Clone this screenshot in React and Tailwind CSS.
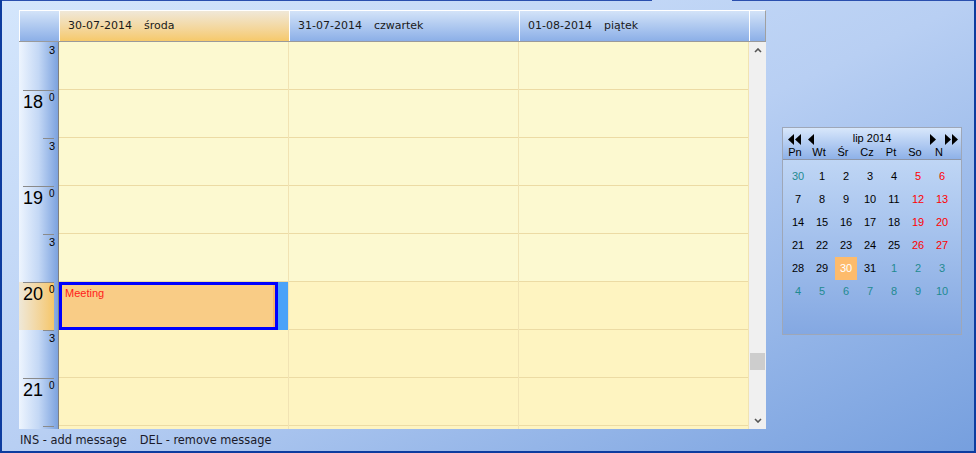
import React from "react";

const days = [
  { date: "30-07-2014", name: "środa", active: true },
  { date: "31-07-2014", name: "czwartek" },
  { date: "01-08-2014", name: "piątek" },
];

// 17:30 .. 21:30, one slot per half hour (last one only peeks in)
const slots = [
  { hour: null },
  { hour: 18 },
  { hour: null },
  { hour: 19 },
  { hour: null },
  { hour: 20, active: true },
  { hour: null },
  { hour: 21 },
  { hour: null, partial: true },
];

const month = [
  [[30, "o"], [1], [2], [3], [4], [5, "w"], [6, "w"]],
  [[7], [8], [9], [10], [11], [12, "w"], [13, "w"]],
  [[14], [15], [16], [17], [18], [19, "w"], [20, "w"]],
  [[21], [22], [23], [24], [25], [26, "w"], [27, "w"]],
  [[28], [29], [30, "t"], [31], [1, "o"], [2, "o"], [3, "o"]],
  [[4, "o"], [5, "o"], [6, "o"], [7, "o"], [8, "o"], [9, "o"], [10, "o"]],
];

const TimeSlot = ({ slot, first }) => {
  if (slot.hour === null) {
    return (
      <div className="h-[48px] shrink-0">
        <div className={`ml-[24px] w-[11px] h-px ${first ? "" : "bg-[#8a8a8a]"}`} />
        {!slot.partial && (
          <div className="w-[36px] pt-[2px] text-right text-[11px] leading-[11px] text-black font-['Liberation_Sans',sans-serif]">
            3
          </div>
        )}
      </div>
    );
  }
  return (
    <div className="h-[48px] shrink-0">
      <div
        className={`w-[35px] h-full ${
          slot.active ? "bg-linear-to-r from-[#efe8d8] to-[#f5c668]" : ""
        }`}
      >
        <div className="ml-[4px] w-[31px] h-px bg-[#8a8a8a]" />
        <div className="flex items-start pl-[4px] pt-[2px] font-['Liberation_Sans',sans-serif] text-black">
          <span className="text-[18px] leading-[18px]">{slot.hour}</span>
          <span className="ml-[6px] text-[10px] leading-[10px]">0</span>
        </div>
      </div>
    </div>
  );
};

const DayColumn = ({ index }) => (
  <div className="w-[230px] shrink-0 border-r border-[#f1e3b3] flex flex-col overflow-hidden">
    {slots.map((slot, i) => (
      <div
        key={i}
        className={`h-[48px] shrink-0 border-b border-[#ecdba4] relative ${
          i >= 5 ? "bg-[#fef4c1]" : "bg-[#fcf9d0]"
        }`}
      >
        {index === 0 && slot.active && (
          <div className="absolute left-0 top-0 w-[229px] h-[48px] flex">
            <div className="w-[219px] h-full border-[3px] border-[#0000ff] bg-[#f9cc86] flex">
              <div className="flex-1 pl-[3px] pt-[2px] text-[11px] leading-[13px] text-[#ff1a1a] font-['Liberation_Sans',sans-serif]">
                Meeting
              </div>
              <div className="w-[2px] bg-[#f3b46c]" />
            </div>
            <div className="w-[10px] h-full bg-[#4aa2f8]" />
          </div>
        )}
      </div>
    ))}
  </div>
);

const Chevron = ({ down }) => (
  <svg width="8" height="5" viewBox="0 0 8 5">
    <path
      d={down ? "M1 1 L4 4 L7 1" : "M1 4 L4 1 L7 4"}
      fill="none"
      stroke="#555"
      strokeWidth="1.6"
    />
  </svg>
);

const Arrow = ({ dir, double }) => {
  const w = double ? 13 : 6;
  const left = dir === "left";
  return (
    <svg width={w} height="11" viewBox={`0 0 ${w} 11`}>
      {left ? (
        <>
          <polygon points="6,0 6,11 0,5.5" fill="#000" />
          {double && <polygon points="13,0 13,11 7,5.5" fill="#000" />}
        </>
      ) : (
        <>
          <polygon points="0,0 0,11 6,5.5" fill="#000" />
          {double && <polygon points="7,0 7,11 13,5.5" fill="#000" />}
        </>
      )}
    </svg>
  );
};

const dateColor = (kind) => {
  if (kind === "w") return "text-[#ff0000]";
  if (kind === "o") return "text-[#1f8a90]";
  if (kind === "t") return "text-white bg-[#fdbb6c]";
  return "text-black";
};

const MiniCalendar = () => (
  <div className="w-[180px] h-[208px] ml-[16px] mt-[117px] border border-[#9ea7b8] bg-linear-to-b from-[#cadef8] to-[#84a8e2] flex flex-col font-['Liberation_Sans',sans-serif] text-[11px]">
    <div className="h-[32px] shrink-0 border-b border-[#8d96a8] bg-linear-to-b from-[#d8e7fb] to-[#8eb1e8]">
      <div className="h-[18px] flex items-end pb-[1px]">
        <div className="flex items-center ml-[5px] gap-[7px]">
          <Arrow dir="left" double />
          <Arrow dir="left" />
        </div>
        <div className="flex-1 text-center leading-[13px] text-black">lip 2014</div>
        <div className="flex items-center mr-[3px] gap-[9px]">
          <Arrow dir="right" />
          <Arrow dir="right" double />
        </div>
      </div>
      <div className="grid grid-cols-7 w-[168px] text-center leading-[13px] text-black">
        {["Pn", "Wt", "Śr", "Cz", "Pt", "So", "N"].map((d) => (
          <div key={d}>{d}</div>
        ))}
      </div>
    </div>
    <div className="pt-[5px] ml-[3px] w-[168px]">
      {month.map((week, r) => (
        <div key={r} className="grid grid-cols-7 h-[23px]">
          {week.map(([n, kind], c) => (
            <div key={c} className="flex items-center justify-center">
              <div
                className={`w-[22px] h-[23px] flex items-center justify-center ${dateColor(kind)}`}
              >
                {n}
              </div>
            </div>
          ))}
        </div>
      ))}
    </div>
  </div>
);

const App = () => {
  return (
    <div className="w-[976px] h-[453px] flex flex-col overflow-hidden border-x-2 border-b-2 border-[#0d3c9f] bg-linear-to-br from-[#d4e6fc] via-[#b8cff3] to-[#769fde]">
      <div className="flex h-px shrink-0">
        <div className="w-[650px] bg-[#2a4fae]" />
        <div className="w-[80px]" />
        <div className="flex-1 bg-[#2a4fae]" />
      </div>

      <div className="flex pt-[9px] pl-[17px] h-[428px] shrink-0">
        {/* scheduler grid */}
        <div className="w-[747px] h-[419px] flex flex-col">
          <div className="h-[32px] shrink-0 flex border-b border-[#9a9a9a] font-['DejaVu_Sans',sans-serif] text-[11px] text-[#1a1a1a]">
            <div className="w-[40px] border-t border-l border-white bg-linear-to-b from-[#d3e3f8] to-[#8cafe7]" />
            {days.map((d) => (
              <div
                key={d.date}
                className={`w-[230px] flex items-center pl-[8px] border-t border-l border-white ${
                  d.active
                    ? "bg-linear-to-b from-[#f0e8d8] to-[#f6c96a]"
                    : "bg-linear-to-b from-[#d3e3f8] to-[#8cafe7]"
                }`}
              >
                <span>{d.date}</span>
                <span className="ml-[12px]">{d.name}</span>
              </div>
            ))}
            <div className="w-[17px] border-t border-l border-r border-white border-r-[#a0a0a0] bg-linear-to-b from-[#d3e3f8] to-[#8cafe7]" />
          </div>

          <div className="h-[387px] flex overflow-hidden">
            <div className="w-[40px] shrink-0 flex flex-col overflow-hidden border-r border-[#808080] bg-linear-to-r from-[#eef5fe] via-[#c4d8f5] to-[#7ca2de]">
              {slots.map((s, i) => (
                <TimeSlot key={i} slot={s} first={i === 0} />
              ))}
            </div>
            {days.map((d, i) => (
              <DayColumn key={d.date} index={i} />
            ))}
            <div className="w-[17px] shrink-0 bg-[#f0f0f0] flex flex-col">
              <div className="h-[17px] flex items-center justify-center">
                <Chevron />
              </div>
              <div className="h-[353px] pt-[294px]">
                <div className="h-[17px] w-[15px] mx-auto bg-[#cdcdcd]" />
              </div>
              <div className="h-[17px] flex items-center justify-center">
                <Chevron down />
              </div>
            </div>
          </div>
        </div>

        <MiniCalendar />
      </div>

      <div className="h-[22px] flex items-center pt-[2px] pl-[18px] font-['DejaVu_Sans',sans-serif] text-[11.4px] text-[#1a1a2a]">
        <span>INS - add message</span>
        <span className="ml-[13px]">DEL - remove message</span>
      </div>
    </div>
  );
};

export default App;
